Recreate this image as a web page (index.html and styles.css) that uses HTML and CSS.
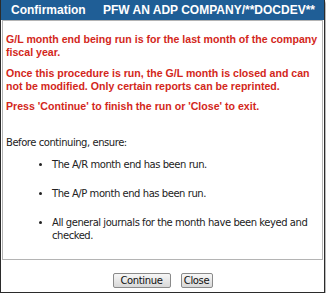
FILE: index.html
```html
<!DOCTYPE html>
<html lang="en">
<head>
  <meta charset="UTF-8" />
  <title>Confirmation</title>
  <link rel="stylesheet" href="styles.css">
</head>
<body>
  <div class="dialog">
    <div class="dialog-title">
      <span>Confirmation</span>
      <span>PFW AN ADP COMPANY/**DOCDEV**</span>
    </div>

    <div class="dialog-body">
      <p class="warn">G/L month end being run is for the last month of the company fiscal year.</p>
      <p class="warn second">Once this procedure is run, the G/L month is closed and can not be modified. Only certain reports can be reprinted.</p>
      <p class="warn third">Press 'Continue' to finish the run or 'Close' to exit.</p>

      <p class="intro">Before continuing, ensure:</p>
      <ul class="checklist">
        <li>The A/R month end has been run.</li>
        <li>The A/P month end has been run.</li>
        <li>All general journals for the month have been keyed and checked.</li>
      </ul>
    </div>

    <div class="dialog-buttons">
      <button class="btn-continue">Continue</button>
      <button class="btn-close">Close</button>
    </div>
  </div>
</body>
</html>
```

FILE: styles.css
```css
body {
  margin: 0;
  font-family: "DejaVu Sans", sans-serif;
  font-size: 10px;
  letter-spacing: -0.45px;
  background: #fff;
}
.dialog {
  width: 325px;
  box-sizing: border-box;
  border: 1px solid #2b2b2b;
  border-top: none;
  box-shadow: 1px 2px 2px #9a9a9a;
  background: #fff;
}
.dialog-title {
  display: flex;
  justify-content: space-between;
  height: 20px;
  align-items: center;
  padding: 0 9px 0 10px;
  background: #1f5e96;
  color: #fff;
  font-family: "Liberation Sans", Arial, sans-serif;
  font-weight: bold;
  font-size: 12px;
  letter-spacing: 0;
}
.dialog-body {
  margin: 0 1px;
  border: 1px solid #b4b4b4;
  padding: 12px 2px 17px 3px;
}
.dialog-body p {
  margin: 0;
  line-height: 13px;
}
.warn {
  color: #d3271b;
  font-family: "Liberation Sans", Arial, sans-serif;
  font-weight: bold;
  font-size: 10.6px;
  letter-spacing: 0;
}
.dialog-body .second {
  margin-top: 8px;
}
.dialog-body .third {
  margin-top: 7px;
}
.dialog-body .intro {
  margin-top: 23px;
  color: #222;
}
.checklist {
  margin: 0;
  padding-left: 46px;
  color: #222;
}
.checklist li {
  line-height: 13px;
  margin-top: 16px;
}
.checklist li:first-child {
  margin-top: 9px;
}
.dialog-buttons {
  display: flex;
  justify-content: center;
  gap: 10px;
  padding: 13px 0 4px;
}
.dialog-buttons button {
  font-family: inherit;
  font-size: 10px;
  letter-spacing: -0.35px;
  height: 15px;
  padding: 0;
  border: 1px solid #8a8a8a;
  border-radius: 2px;
  background: linear-gradient(#f7f7f7, #d8d8d8);
  color: #111;
}
.btn-continue {
  width: 58px;
}
.btn-close {
  width: 32px;
}
```
